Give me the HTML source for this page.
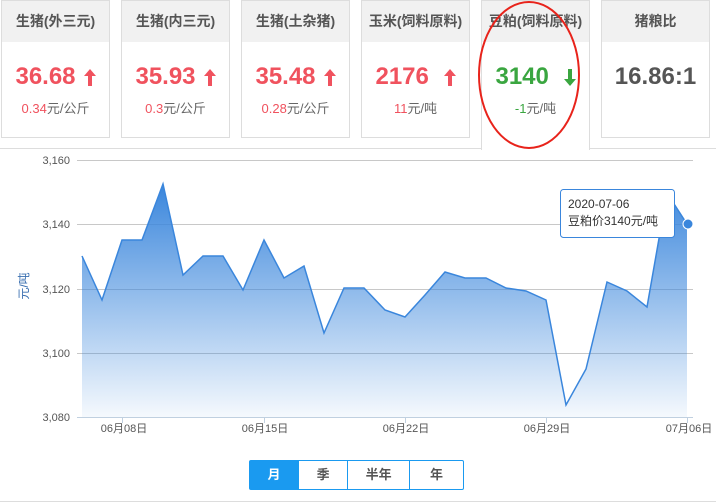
<!DOCTYPE html>
<html><head><meta charset="utf-8"><style>
body{margin:0;width:716px;height:502px;overflow:hidden;background:#fff;font-family:"Liberation Sans","Noto Sans CJK SC",sans-serif;position:relative}
.card{position:absolute;top:0;width:107px;height:136px;border:1px solid #ddd;background:#fff;text-align:center}
.hd{height:41px;background:#f1f1f1;line-height:41px;font-size:14px;font-weight:bold;color:#555}
.v{margin-top:22px;font-size:24px;font-weight:bold;color:#f0525e;height:26px;line-height:26px}
.v svg{margin-left:8px;vertical-align:-2px}
.s{margin-top:8px;font-size:13px;color:#666}
.s b{font-weight:normal;color:#f0525e}
.g{color:#3aa640!important}
.panel{position:absolute;left:0;top:148px;width:716px;height:352px;border-top:1px solid #ddd;border-bottom:1px solid #ddd}
.btns{position:absolute;left:249px;top:460px;width:215px;height:30px;border:1px solid #1a9af0;border-radius:2px;display:flex;font-size:13px;font-weight:bold;color:#555;box-sizing:border-box}
.btns div{text-align:center;line-height:28px;border-right:1px solid #1a9af0}
.btns div:last-child{border-right:none}
</style></head><body>
<div class="panel"></div>
<div class="card" style="left:1px"><div class="hd">生猪(外三元)</div><div class="v">36.68<svg width="12" height="17" viewBox="0 0 12 17"><path d="M6 0L12 7H8V17H4V7H0Z" fill="#f0525e"/></svg></div><div class="s"><b>0.34</b>元/公斤</div></div>
<div class="card" style="left:121px"><div class="hd">生猪(内三元)</div><div class="v">35.93<svg width="12" height="17" viewBox="0 0 12 17"><path d="M6 0L12 7H8V17H4V7H0Z" fill="#f0525e"/></svg></div><div class="s"><b>0.3</b>元/公斤</div></div>
<div class="card" style="left:241px"><div class="hd">生猪(土杂猪)</div><div class="v">35.48<svg width="12" height="17" viewBox="0 0 12 17"><path d="M6 0L12 7H8V17H4V7H0Z" fill="#f0525e"/></svg></div><div class="s"><b>0.28</b>元/公斤</div></div>
<div class="card" style="left:361px"><div class="hd">玉米(饲料原料)</div><div class="v">2176 <svg width="12" height="17" viewBox="0 0 12 17"><path d="M6 0L12 7H8V17H4V7H0Z" fill="#f0525e"/></svg></div><div class="s"><b>11</b>元/吨</div></div>
<div class="card" style="left:481px;height:149px;border-bottom:none;z-index:2"><div class="hd">豆粕(饲料原料)</div><div class="v g">3140 <svg width="12" height="17" viewBox="0 0 12 17"><path d="M6 17L12 10H8V0H4V10H0Z" fill="#3aa640"/></svg></div><div class="s"><b class="g">-1</b>元/吨</div></div>
<div class="card" style="left:601px"><div class="hd">猪粮比</div><div class="v" style="color:#555">16.86:1</div></div>
<svg style="position:absolute;left:0;top:0;z-index:3" width="716" height="502">
<ellipse cx="529" cy="75" rx="50" ry="73" fill="none" stroke="#e8231b" stroke-width="2"/>
<defs><linearGradient id="gr" x1="0" y1="0" x2="0" y2="1"><stop offset="0" stop-color="#3a86dc"/><stop offset="1" stop-color="#3a86dc" stop-opacity="0.05"/></linearGradient></defs>
<g stroke="#c8c8c8" stroke-width="1">
<line x1="77" y1="160.5" x2="693" y2="160.5"/><line x1="77" y1="224.5" x2="693" y2="224.5"/><line x1="77" y1="289.5" x2="693" y2="289.5"/><line x1="77" y1="353.5" x2="693" y2="353.5"/></g>
<path d="M82,256 L102,300 122,240 142,240 163,184 183,275 203,256 223,256 243,290 264,240 284,278 304,266 324,333 344,288 364,288 385,310 405,317 425,295 445,272 465,278 486,278 506,288 526,291 546,300 566,405 586,369 607,282 627,291 647,307 667,193 687,224 L687,417 L82,417Z" fill="url(#gr)"/>
<path d="M82,256 L102,300 122,240 142,240 163,184 183,275 203,256 223,256 243,290 264,240 284,278 304,266 324,333 344,288 364,288 385,310 405,317 425,295 445,272 465,278 486,278 506,288 526,291 546,300 566,405 586,369 607,282 627,291 647,307 667,193 687,224" fill="none" stroke="#3a86dc" stroke-width="1.5"/>
<line x1="77" y1="417.5" x2="693" y2="417.5" stroke="#c0d0e0"/>
<g stroke="#c0d0e0"><line x1="122.5" y1="417" x2="122.5" y2="423"/><line x1="264.5" y1="417" x2="264.5" y2="423"/><line x1="405.5" y1="417" x2="405.5" y2="423"/><line x1="546.5" y1="417" x2="546.5" y2="423"/><line x1="687.5" y1="417" x2="687.5" y2="423"/></g>
<circle cx="688" cy="224" r="5" fill="#3a86dc" stroke="#fff" stroke-width="1"/>
<g font-size="11" fill="#555" text-anchor="end" font-family="Liberation Sans,sans-serif"><text x="70" y="164">3,160</text><text x="70" y="228">3,140</text><text x="70" y="293">3,120</text><text x="70" y="357">3,100</text><text x="70" y="421">3,080</text></g>
<g font-size="11" fill="#555" text-anchor="middle" font-family="Liberation Sans,Noto Sans CJK SC,sans-serif"><text x="124" y="432">06月08日</text><text x="265" y="432">06月15日</text><text x="406" y="432">06月22日</text><text x="547" y="432">06月29日</text><text x="689" y="432">07月06日</text></g>
<text transform="translate(28,286) rotate(-90)" font-size="12" fill="#3a6fb0" text-anchor="middle" font-family="Liberation Sans,Noto Sans CJK SC,sans-serif">元/吨</text>
<rect x="560.5" y="189.5" width="114" height="48" rx="3" fill="#fff" stroke="#3a86dc"/>
<text x="568" y="208" font-size="12" fill="#333" font-family="Liberation Sans,Noto Sans CJK SC,sans-serif">2020-07-06</text>
<text x="568" y="225" font-size="12" fill="#333" font-family="Liberation Sans,Noto Sans CJK SC,sans-serif">豆粕价3140元/吨</text>
</svg>
<div class="btns"><div style="width:49px;background:#1a9af0;color:#fff">月</div><div style="width:49px">季</div><div style="width:62px">半年</div><div style="width:54px">年</div></div>
</body></html>
